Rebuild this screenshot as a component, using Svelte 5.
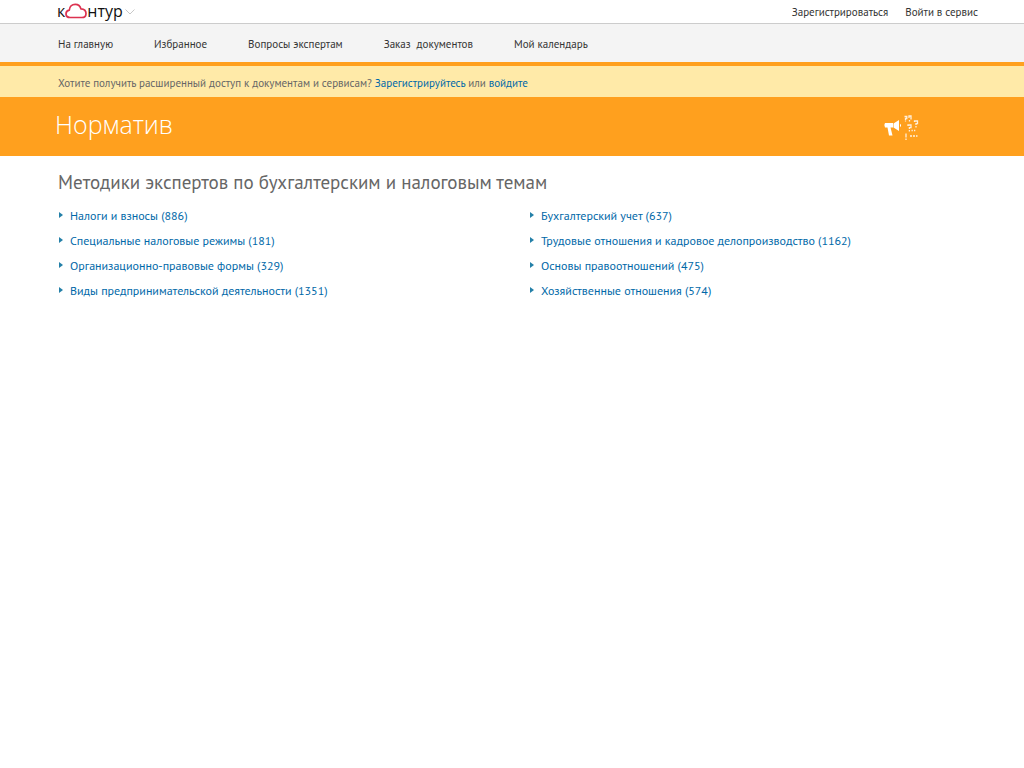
<script lang="ts">
  interface Topic {
    title: string;
    count: number;
  }

  const navItems = ['На главную', 'Избранное', 'Вопросы экспертам', 'Заказ\u00a0 документов', 'Мой календарь'];

  // Listed row by row, two topics in each row
  const topics: Topic[] = [
    { title: 'Налоги и взносы', count: 886 },
    { title: 'Бухгалтерский учет', count: 637 },
    { title: 'Специальные налоговые режимы', count: 181 },
    { title: 'Трудовые отношения и кадровое делопроизводство', count: 1162 },
    { title: 'Организационно-правовые формы', count: 329 },
    { title: 'Основы правоотношений', count: 475 },
    { title: 'Виды предпринимательской деятельности', count: 1351 },
    { title: 'Хозяйственные отношения', count: 574 }
  ];
</script>

<header class="topbar">
  <a class="logo" href="#kontur">
    <span>к</span>
    <svg width="22" height="16" viewBox="0 0 22 16" aria-hidden="true">
      <path
        d="M5 14.500C2.600 14.500 1 12.900 1 10.900c0-2 1.300-3.300 3.300-3.700C4.500 3.700 7 1.300 10.200 1.300c2.900 0 5.100 1.800 5.700 4.600 3 .2 5.100 2 5.100 4.500 0 2.400-1.700 4.100-4.200 4.100z"
        fill="none"
        stroke="#dc3250"
        stroke-width="1.7"
        stroke-linejoin="round"
      />
    </svg>
    <span>нтур</span>
    <svg class="chevron" width="10" height="6" viewBox="0 0 10 6" aria-hidden="true">
      <path d="M.5.5 5 5 9.500.500" fill="none" stroke="#c8c8c8" />
    </svg>
  </a>
  <div class="account">
    <a href="#register">Зарегистрироваться</a>
    <a href="#login">Войти в сервис</a>
  </div>
</header>

<nav>
  {#each navItems as item}
    <a href="#nav">{item}</a>
  {/each}
</nav>

<div class="notice">
  Хотите получить расширенный доступ к документам и сервисам?
  <a href="#register">Зарегистрируйтесь</a> или <a href="#login">войдите</a>
</div>

<div class="banner">
  <a class="product" href="#normativ">Норматив</a>
  <svg width="36" height="28" viewBox="0 0 36 28" aria-hidden="true">
    <g fill="#fff">
      <path d="M2 10h8v4.500H7.500l2 8H6l-1.500-8H2q-1.500-2.200 0-4.500z" />
      <path d="M10.500 10.500 16 7v11l-5.500-3.500zM17 10.800q2.200 1.700 0 3.400z" />
    </g>
    <g fill="none" stroke="#fff" stroke-width="1.300" opacity=".85">
      <path d="M21.500 3.500h2.300v2H22.500V7M22.500 7.500v1M26 5V3h2v3.500M26.500 7v1.500" />
      <path d="M25 13v-1h3v2.600h-1.600V16M26.400 17v1.400" />
      <path d="M31.500 9V8h3v2.600H33V12M33 13v1.400" />
      <path d="M23 20.500v4M23 25.500V27M28.500 17.500h1.300M31 17.500h1.300" />
      <path d="M27 23h2M30 23h2M33 23h1.500" />
    </g>
  </svg>
</div>

<main>
  <h1>Методики экспертов по бухгалтерским и налоговым темам</h1>
  <ul>
    {#each topics as topic}
      <li><a href="#topic">{topic.title} ({topic.count})</a></li>
    {/each}
  </ul>
</main>

<style>
  :global(body) {
    background: #fff;
    color: #333;
    font-family: 'PT Sans', 'Noto Sans', sans-serif;
    font-size: 11px;
  }

  a {
    color: inherit;
    text-decoration: none;
  }

  a:hover {
    text-decoration: underline;
  }

  .topbar {
    display: flex;
    align-items: center;
    justify-content: space-between;
    height: 23px;
    padding: 0 46px 0 57px;
    border-bottom: 1px solid #ccc;
  }

  .logo {
    display: flex;
    align-items: center;
    padding-bottom: 1px;
    color: #111;
    font-family: 'Open Sans', sans-serif;
    font-size: 16px;
    line-height: 20px;
  }

  .chevron {
    margin: 2px 0 0 2px;
  }

  .account {
    display: flex;
    gap: 17px;
  }

  nav {
    display: flex;
    align-items: center;
    gap: 41px;
    height: 36px;
    padding: 2px 58px 0;
    background: #f4f4f4;
    border-bottom: 4px solid #ffa01e;
  }

  .notice {
    padding: 3px 58px 0;
    background: #ffeaa8;
    color: #666;
    line-height: 28px;
  }

  .notice a {
    color: #0068a8;
  }

  .banner {
    display: flex;
    align-items: center;
    justify-content: space-between;
    height: 59px;
    padding: 0 105px 0 55px;
    background: #ffa01e;
  }

  .product {
    padding-bottom: 5px;
    color: #fff;
    font-family: 'Open Sans', sans-serif;
    font-size: 25px;
    font-weight: 300;
  }

  main {
    padding: 12px 24px 0 58px;
  }

  h1 {
    margin: 0 0 7px;
    color: #666;
    font-size: 19px;
    font-weight: 400;
    line-height: 28px;
  }

  ul {
    display: grid;
    grid-template-columns: 1fr 1fr;
    margin: 0;
    padding: 0;
    list-style: none;
    color: #0068a8;
    font-size: 12px;
    line-height: 25px;
  }

  li {
    display: flex;
    align-items: center;
  }

  li::before {
    content: '';
    margin: 0 7px 2px 1px;
    border: solid transparent;
    border-width: 3px 0 3px 4px;
    border-left-color: #2480a8;
  }
</style>
